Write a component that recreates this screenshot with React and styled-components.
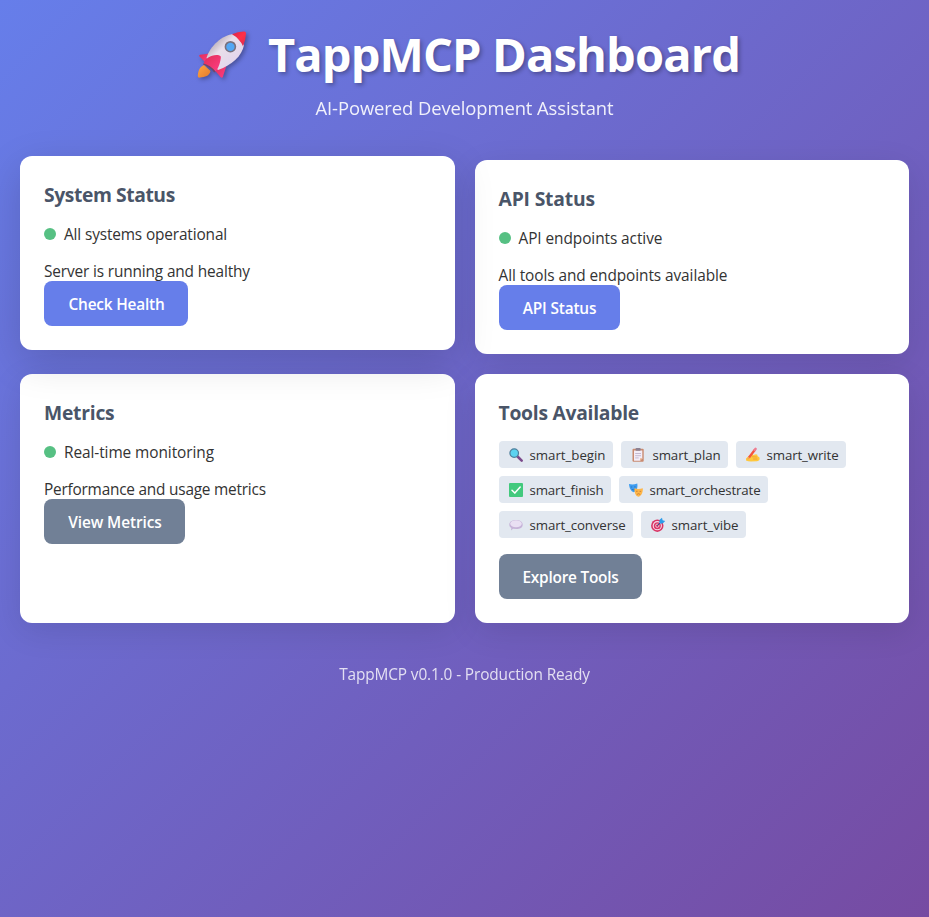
import React from 'react';
import styled, { createGlobalStyle } from 'styled-components';

const GlobalStyle = createGlobalStyle`
  * { margin: 0; padding: 0; box-sizing: border-box; }
  body {
    min-height: 100vh;
    font-family: "Open Sans", "Noto Sans", sans-serif;
    font-size: 15.4px;
    line-height: 21px;
    color: #333;
    background: linear-gradient(135deg, #667eea 0%, #764ba2 100%);
  }
`;

const Page = styled.div`
  min-height: 100vh;
  max-width: 1200px;
  margin: 0 auto;
  padding: 20px;
`;

const Header = styled.header`
  margin-bottom: 38px;
  text-align: center;
  color: #fff;
`;

const Title = styled.h1`
  display: flex;
  align-items: center;
  justify-content: center;
  margin-bottom: 6px;
  font-size: 47px;
  font-weight: 700;
  line-height: 68px;
  letter-spacing: -0.87px;
  white-space: nowrap;
  text-shadow: 2px 2px 4px rgba(0, 0, 0, 0.3);
`;

const RocketIcon = styled.svg`
  width: 50px;
  height: 48px;
  margin: 2px 21px 0 8px;
  filter: drop-shadow(2px 2px 2px rgba(0, 0, 0, 0.3));
`;

const Subtitle = styled.p`
  font-size: 18.4px;
  line-height: 28px;
  letter-spacing: -0.08px;
  opacity: 0.9;
`;

const Grid = styled.main`
  display: grid;
  grid-template-columns: 1fr 1fr;
  gap: 20px;
`;

const Card = styled.section`
  padding: 24px;
  border-radius: 12px;
  background: #fff;
  box-shadow: ${p => (p.$lifted ? '0 12px 40px rgba(0, 0, 0, 0.15)' : '0 8px 32px rgba(0, 0, 0, 0.1)')};
  transform: ${p => (p.$lifted ? 'translateY(-4px)' : 'none')};
`;

const CardTitle = styled.h3`
  margin-bottom: 14px;
  font-size: 19.3px;
  font-weight: 700;
  line-height: 29px;
  letter-spacing: ${p => p.$track}px;
  color: #4a5568;
`;

const Status = styled.div`
  display: flex;
  align-items: flex-start;
  margin-bottom: 14px;
  line-height: 23px;
  letter-spacing: ${p => p.$track}px;
`;

const Dot = styled.span`
  width: 12px;
  height: 12px;
  margin: 5px 8px 0 0;
  border-radius: 50%;
  background: #48bb78;
  opacity: 0.92;
`;

const Description = styled.p`
  margin-bottom: -2px;
  line-height: 23px;
  letter-spacing: ${p => p.$track}px;
`;

const Button = styled.button`
  display: block;
  position: relative;
  width: ${p => p.$width}px;
  height: 45px;
  padding: 2px 0 0 1px;
  border: 0;
  border-radius: 8px;
  font: 600 15.4px/21px "Open Sans", "Noto Sans", sans-serif;
  letter-spacing: ${p => p.$track}px;
  white-space: nowrap;
  color: #fff;
  background: ${p => (p.$secondary ? '#718096' : '#667eea')};
`;

const ToolList = styled.div`
  display: flex;
  flex-wrap: wrap;
  gap: 8px;
  margin-bottom: 16px;
`;

const Tool = styled.span`
  display: flex;
  align-items: center;
  justify-content: space-between;
  width: ${p => p.$width}px;
  height: 27px;
  padding: 2px 7px 0 10px;
  border-radius: 4px;
  font-size: 13.3px;
  line-height: 19px;
  letter-spacing: ${p => p.$track}px;
  white-space: nowrap;
  background: #e2e8f0;
`;

const ToolIcon = styled.svg`
  width: 14px;
  height: 14px;
  margin-bottom: 2px;
  overflow: visible;
`;

const Footer = styled.footer`
  margin-top: 40px;
  text-align: center;
  line-height: 23px;
  letter-spacing: -0.12px;
  color: #fff;
  opacity: 0.8;
`;

function Rocket() {
  return (
    <RocketIcon viewBox="0 0 50 48">
      <defs>
        <linearGradient id="hull" x1="0.2" y1="0.2" x2="0.8" y2="0.8">
          <stop offset="0" stopColor="#b9aeb8" />
          <stop offset="0.35" stopColor="#e9dfea" />
          <stop offset="1" stopColor="#e3d4ec" />
        </linearGradient>
        <linearGradient id="fin" x1="0" y1="0" x2="1" y2="1">
          <stop offset="0" stopColor="#e02e55" />
          <stop offset="1" stopColor="#ff3d86" />
        </linearGradient>
        <linearGradient id="nose" x1="0" y1="0" x2="1" y2="1">
          <stop offset="0" stopColor="#d3264c" />
          <stop offset="0.5" stopColor="#ff3048" />
          <stop offset="1" stopColor="#d92c50" />
        </linearGradient>
        <linearGradient id="flame" x1="0" y1="0" x2="1" y2="1">
          <stop offset="0" stopColor="#ffa640" />
          <stop offset="1" stopColor="#e47a2c" />
        </linearGradient>
      </defs>
      <path d="M7 34C2 36 1 41 .8 45Q.8 47 3 46.6C8 46 12.5 45 13.5 40Z" fill="url(#flame)" />
      <path d="M13 22.5 3 23.8Q1.400 24.3 2.500 25.5L8 31Z" fill="url(#fin)" />
      <path d="M30 33 25.800 46Q25 47.500 23.500 46L17.500 39Z" fill="url(#fin)" />
      <path d="M9.5 27C13 15 25 4 37 3L47 14C45 25 35 34 21 39Z" fill="url(#hull)" />
      <path d="M35 3.300Q41 .3 47.500 .5Q49.300 .5 49 3Q48.700 9 46 15.300Q42.500 7.500 35 3.300Z" fill="url(#nose)" />
      <path d="M6.5 32.500C8.500 27 15 23 22.500 24.400Q24.500 25 23.800 27C23 33 21 38 18.500 40.500Q13 35 6.500 32.500Z" fill="url(#fin)" />
      <path d="M6.500 32.500Q14 34.500 18.500 40.500L17.300 41.500Q13 36 6 33.500Z" fill="#6f4769" />
      <circle cx="33.4" cy="15.7" r="5.800" fill="#77717f" />
      <circle cx="33.4" cy="15.9" r="4.200" fill="#53a7f4" />
    </RocketIcon>
  );
}

const drawings = {
  search: (
    <>
      <path d="m8.300 8.300 4.400 4.300" stroke="#7b4a8b" strokeWidth="2.600" strokeLinecap="round" />
      <circle cx="5.200" cy="5.100" r="4.300" fill="#5cd3f1" stroke="#517f9c" strokeWidth="1.200" />
    </>
  ),
  clipboard: (
    <>
      <rect x="1.500" y=".8" width="11.200" height="13" rx="1" fill="#c98a70" />
      <path d="M3 2.500h8.300v7.800l-2.200 2.500H3z" fill="#f3edf8" />
      <path d="M4.200 5.500h5.800M4.200 7.700h5.800M4.200 9.900h3.500" stroke="#b7abc6" strokeWidth=".8" />
      <path d="m9 12.800 .2-2.500h2.100z" fill="#e8ad83" />
      <rect x="4.500" y="0" width="5.200" height="2.800" rx="1" fill="#8c8192" />
    </>
  ),
  write: (
    <>
      <path d="M0 10.500 4.500 6.500Q6.500 5 7 7L10 6.300Q12 6.300 11.500 8L13.500 9.500Q14.300 12.800 11 13.200L5 13.500Q2 13.500 0 12.500Z" fill="#ffc83d" />
      <path d="m6.500 8.800 4 .2m-3 2 3.500 0" stroke="#e89a35" strokeWidth=".8" strokeLinecap="round" />
      <path d="M3 9.500 8.900 1.700" stroke="#f4553f" strokeWidth="2.300" />
      <path d="M8.700 2 9.600 .9" stroke="#ef7c91" strokeWidth="2.500" strokeLinecap="round" />
      <path d="m1.300 12 .6-3.200 2.100 1.400z" fill="#f4a05c" />
    </>
  ),
  check: (
    <>
      <rect x="0" y="0" width="14" height="14" rx="1" fill="#42c97d" />
      <path d="m3 7.200 2.800 2.900L11.200 4" fill="none" stroke="#fff" strokeWidth="1.500" strokeLinecap="round" strokeLinejoin="round" />
    </>
  ),
  masks: (
    <>
      <path d="M0 1Q4 2 8.300 .5C9 5 7.500 8.500 4.700 9.200 2 8.500 .2 5 0 1Z" fill="#3e9df0" />
      <path d="M1.700 4h1.500m2-.1h1.400M2.700 6.300Q4.300 7.600 6 6.100" fill="none" stroke="#24579b" strokeWidth=".6" />
      <path d="M5.500 5.300Q9.500 6.800 13.800 5.300C14 10 12.300 13.300 9.300 13.800 6.500 13 5.200 9.500 5.500 5.300Z" fill="#ffb648" />
      <path d="M7 8.300h1.600m2 .1h1.500M7.800 11.500Q9.600 9.900 11.300 11.500" fill="none" stroke="#a76532" strokeWidth=".6" />
    </>
  ),
  speech: (
    <>
      <path d="M7 2C11 2 13.700 3.800 13.700 6.700S10.800 11 7.500 11L4 10.800 2 12.600 2.300 10C.8 9.200 .3 8 .3 6.600 .3 3.700 3.300 2 7 2Z" fill="#c6b3d8" />
      <ellipse cx="7" cy="5.800" rx="5.800" ry="3.500" fill="#e9dff3" />
    </>
  ),
  target: (
    <>
      <circle cx="6.300" cy="7.700" r="6.200" fill="#d93565" />
      <circle cx="6.300" cy="7.700" r="4.100" fill="none" stroke="#f5dce9" strokeWidth="1.100" />
      <circle cx="6.300" cy="7.700" r="1.700" fill="none" stroke="#f5dce9" strokeWidth=".8" />
      <path d="m6.300 7.700 4.500-4.500" stroke="#245f9b" strokeWidth="1" />
      <path d="M8.200 4.600 8.600 1.800 11 -.3l.6 2.500 2.600 .7-2.200 2.400-2.500 .5z" fill="#2e9cea" />
    </>
  ),
};

const tools = [
  { name: 'smart_begin', icon: 'search', width: 114, track: -0.03 },
  { name: 'smart_plan', icon: 'clipboard', width: 107, track: -0.1 },
  { name: 'smart_write', icon: 'write', width: 110, track: -0.12 },
  { name: 'smart_finish', icon: 'check', width: 112, track: -0.16 },
  { name: 'smart_orchestrate', icon: 'masks', width: 149, track: -0.15 },
  { name: 'smart_converse', icon: 'speech', width: 134, track: -0.14 },
  { name: 'smart_vibe', icon: 'target', width: 105, track: -0.06 },
];

export default function App() {
  return (
    <>
      <GlobalStyle />
      <Page>
        <Header>
          <Title><Rocket />TappMCP Dashboard</Title>
          <Subtitle>AI-Powered Development Assistant</Subtitle>
        </Header>
        <Grid>
          <Card $lifted>
            <CardTitle $track={-0.41}>System Status</CardTitle>
            <Status $track={-0.14}><Dot />All systems operational</Status>
            <Description $track={-0.145}>Server is running and healthy</Description>
            <Button $width={144} $track={-0.2}>Check Health</Button>
          </Card>
          <Card>
            <CardTitle $track={-0.16}>API Status</CardTitle>
            <Status $track={-0.07}><Dot />API endpoints active</Status>
            <Description $track={-0.08}>All tools and endpoints available</Description>
            <Button $width={121} $track={-0.17}>API Status</Button>
          </Card>
          <Card>
            <CardTitle $track={-0.23}>Metrics</CardTitle>
            <Status $track={-0.07}><Dot />Real-time monitoring</Status>
            <Description $track={-0.22}>Performance and usage metrics</Description>
            <Button $secondary $width={141} $track={-0.08}>View Metrics</Button>
          </Card>
          <Card>
            <CardTitle $track={-0.26}>Tools Available</CardTitle>
            <ToolList>
              {tools.map(t => (
                <Tool key={t.name} $width={t.width} $track={t.track}>
                  <ToolIcon viewBox="0 0 14 14">{drawings[t.icon]}</ToolIcon>
                  {t.name}
                </Tool>
              ))}
            </ToolList>
            <Button $secondary $width={143} $track={-0.24}>Explore Tools</Button>
          </Card>
        </Grid>
        <Footer>TappMCP v0.1.0 - Production Ready</Footer>
      </Page>
    </>
  );
}
